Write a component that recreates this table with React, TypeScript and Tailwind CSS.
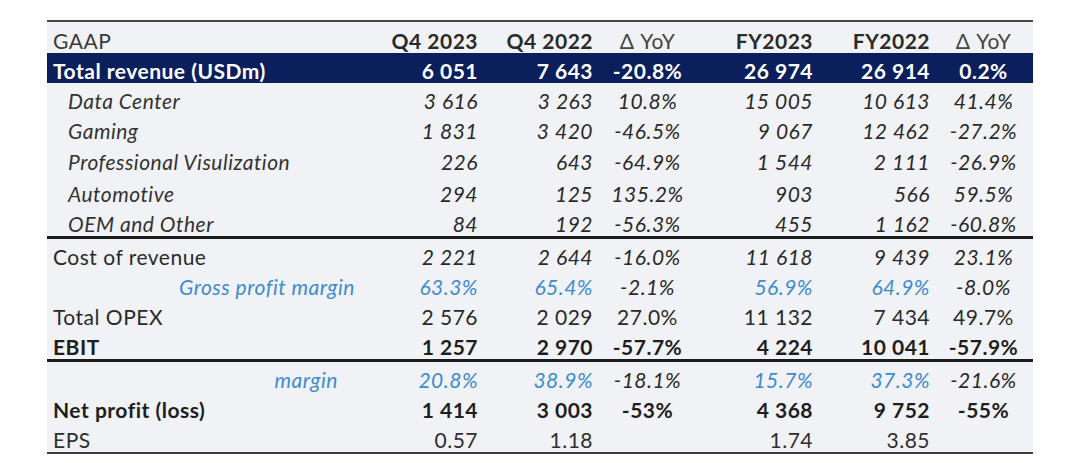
import React from 'react'

type Kind = 'header' | 'total' | 'segment' | 'cost' | 'margin' | 'plain' | 'ebit' | 'net' | 'eps'

type Row = {
  kind: Kind
  label: string
  values: string[]
  h: string
  extra?: string
}

// heights follow the spreadsheet rows; borders are counted inside the row
const rows: Row[] = [
  { kind: 'header', h: 'h-[31px]', label: 'GAAP', values: ['Q4 2023', 'Q4 2022', 'Δ YoY', 'FY2023', 'FY2022', 'Δ YoY'] },
  { kind: 'total', h: 'h-[30px]', label: 'Total revenue (USDm)', values: ['6 051', '7 643', '-20.8%', '26 974', '26 914', '0.2%'] },
  { kind: 'segment', h: 'h-[30px]', label: 'Data Center', values: ['3 616', '3 263', '10.8%', '15 005', '10 613', '41.4%'] },
  { kind: 'segment', h: 'h-[30px]', label: 'Gaming', values: ['1 831', '3 420', '-46.5%', '9 067', '12 462', '-27.2%'] },
  { kind: 'segment', h: 'h-[31px]', label: 'Professional Visulization', values: ['226', '643', '-64.9%', '1 544', '2 111', '-26.9%'] },
  { kind: 'segment', h: 'h-[32px]', label: 'Automotive', values: ['294', '125', '135.2%', '903', '566', '59.5%'] },
  { kind: 'segment', h: 'h-[33px]', extra: 'border-b-[3px] border-[#1c1c1c]', label: 'OEM and Other', values: ['84', '192', '-56.3%', '455', '1 162', '-60.8%'] },
  { kind: 'cost', h: 'h-[30px]', label: 'Cost of revenue', values: ['2 221', '2 644', '-16.0%', '11 618', '9 439', '23.1%'] },
  { kind: 'margin', h: 'h-[30px]', extra: 'pr-[30px]', label: 'Gross profit margin', values: ['63.3%', '65.4%', '-2.1%', '56.9%', '64.9%', '-8.0%'] },
  { kind: 'plain', h: 'h-[30px]', label: 'Total OPEX', values: ['2 576', '2 029', '27.0%', '11 132', '7 434', '49.7%'] },
  { kind: 'ebit', h: 'h-[33px]', label: 'EBIT', values: ['1 257', '2 970', '-57.7%', '4 224', '10 041', '-57.9%'] },
  { kind: 'margin', h: 'h-[30px]', extra: 'pr-[47px]', label: 'margin', values: ['20.8%', '38.9%', '-18.1%', '15.7%', '37.3%', '-21.6%'] },
  { kind: 'net', h: 'h-[30px]', label: 'Net profit (loss)', values: ['1 414', '3 003', '-53%', '4 368', '9 752', '-55%'] },
  { kind: 'eps', h: 'h-[32px]', label: 'EPS', values: ['0.57', '1.18', '', '1.74', '3.85', ''] },
]

const grid = 'grid grid-cols-[338px_97px_115px_101px_119px_117px_99px]'

function rowClass(row: Row) {
  switch (row.kind) {
    case 'total':
      return 'bg-[#0b1f5c] text-white font-bold'
    case 'segment':
      return `text-[#2a2a2a] ${row.extra ?? ''}`
    case 'ebit':
      return 'font-bold text-[#1e1e1e] border-b-[3px] border-[#1c1c1c]'
    case 'net':
      return 'font-bold text-[#1e1e1e]'
    case 'eps':
      return 'text-[#2e2e2e] border-b-2 border-[#3c3c3c]'
    default:
      return 'text-[#2a2a2a]'
  }
}

function labelClass(row: Row) {
  if (row.kind === 'segment') return 'pl-[21px] italic text-[#333]'
  if (row.kind === 'margin') return `justify-end italic text-[#3d8ccf] ${row.extra}`
  if (row.kind === 'header') return 'pl-[6px] text-[#3a3a3a]'
  return 'pl-[6px]'
}

function valueClass(row: Row, i: number) {
  const delta = i === 2 || i === 5
  let cls = delta ? 'justify-center' : 'justify-end pr-[4px]'
  if (row.kind === 'segment' || row.kind === 'cost' || row.kind === 'margin') cls += ' italic'
  if (row.kind === 'header') cls += delta ? ' text-[#444]' : ' font-bold text-[#2a2a2a]'
  if (row.kind === 'margin' && !delta) cls += ' text-[#3d8ccf]'
  return cls
}

export default function App() {
  return (
    <div className="w-[1077px] h-[463px] bg-white pt-[20px] pl-[47px] font-['Lato','Open_Sans',sans-serif] text-[21px] tracking-[0.5px] leading-none">
      <div className="w-[986px] bg-[#f1f2f6] border-t-2 border-[#474747]">
        {rows.map((row, r) => (
          <div key={r} className={`${grid} ${row.h} ${rowClass(row)}`}>
            <div className={`flex items-end pb-[2px] whitespace-nowrap ${labelClass(row)}`}>{row.label}</div>
            {row.values.map((v, i) => (
              <div key={i} className={`flex items-end pb-[2px] whitespace-nowrap ${valueClass(row, i)}`}>
                {v}
              </div>
            ))}
          </div>
        ))}
      </div>
    </div>
  )
}
